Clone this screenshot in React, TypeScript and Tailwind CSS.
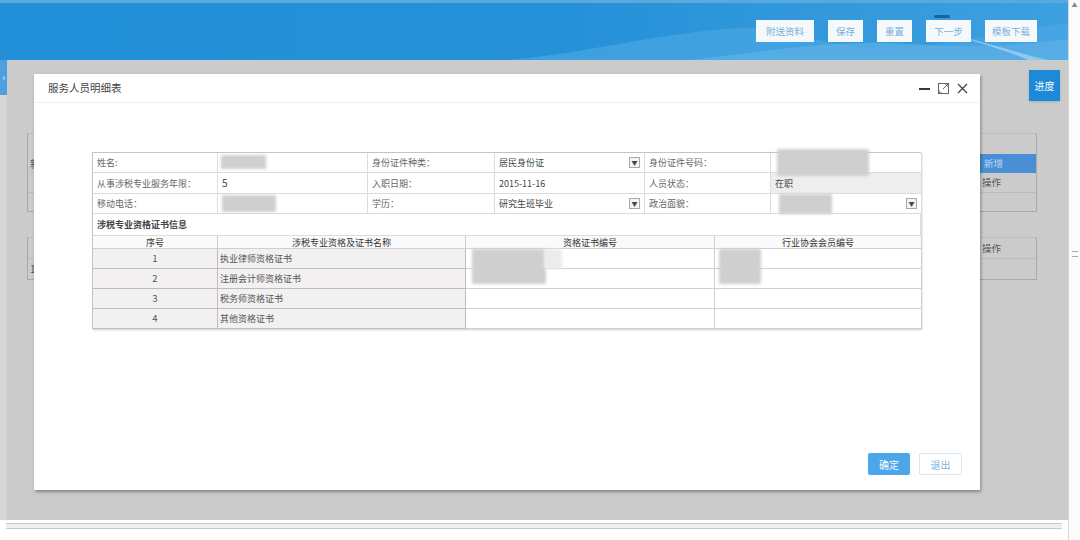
import { ReactNode } from 'react';

const font = { fontFamily: '"Noto Sans CJK SC", "Noto Sans", sans-serif' };

const topButtons = [
    { label: '附送资料', w: 'w-[58px]' },
    { label: '保存', w: 'w-[35px]' },
    { label: '重置', w: 'w-[35px]' },
    { label: '下一步', w: 'w-[45px]' },
    { label: '模板下载', w: 'w-[52px]' },
];

const certs = ['执业律师资格证书', '注册会计师资格证书', '税务师资格证书', '其他资格证书'];

function Blob({ className }: { className: string }) {
    return <span className={`absolute bg-[#cfcfcf] blur-[1.5px] ${className}`} />;
}

function Drop() {
    return (
        <span className="flex h-[11px] w-[11px] items-center justify-center border border-[#a9a9a9] bg-[#f4f4f4] text-[6px] leading-none text-[#444]">▼</span>
    );
}

function Cell({ children, className = '' }: { children?: ReactNode; className?: string }) {
    return (
        <div className={`relative flex items-center border-r border-b border-[#dcdcdc] px-[4px] text-[9px] leading-none ${className}`}>
            {children}
        </div>
    );
}

export default function App() {
    return (
        <div className="flex h-[540px] w-[1080px] overflow-hidden bg-white" style={font}>
            <div className="flex w-[1068px] flex-col">
                {/* Header */}
                <header className="relative h-[60px] overflow-hidden border-t-[3px] border-[#58a9de] bg-gradient-to-r from-[#2290d8] via-[#2390d8] to-[#3da0e0]">
                    <svg className="absolute right-0 top-0 h-[57px] w-[560px]" viewBox="0 0 560 57" preserveAspectRatio="none">
                        <path d="M0 57 C80 50 150 30 230 25 C280 22 300 40 360 45 C420 50 470 30 560 20 L560 57 Z" fill="#4aa7e2" opacity="0.7" />
                        <path d="M180 57 C260 48 320 38 380 40 C430 42 470 48 560 36 L560 57 Z" fill="#62b4e8" opacity="0.6" />
                        <path d="M440 30 C480 40 510 50 540 57 L520 57 C500 48 470 40 440 30 Z" fill="#ffffff" opacity="0.35" />
                    </svg>
                    <div className="relative flex justify-end gap-[14px] pr-[31px] pt-[17px]">
                        {topButtons.map((b) => (
                            <div key={b.label} className="relative">
                                {b.label === '下一步' && <span className="absolute left-[8px] top-[-5px] h-[3px] w-[16px] rounded-sm bg-[#1c5f9a]" />}
                                <button className={`flex h-[22px] ${b.w} items-center justify-center bg-[#f5f9fc] text-[9.5px] text-[#7aafd8]`}>{b.label}</button>
                            </div>
                        ))}
                    </div>
                </header>

                {/* Body */}
                <div className="flex h-[460px]">
                    <div className="flex w-[7px] flex-col bg-[#d6d6d6]">
                        <div className="flex h-[35px] items-center justify-center bg-[#4d9fe0] text-[9px] text-white">›</div>
                    </div>
                    <div className="relative flex-1 bg-[#cbcbcb]">
                        {/* underlying page, dimmed */}
                        <div className="flex flex-col gap-[25px] pl-[20px] pt-[73px]">
                            <div className="flex h-[79px] w-[1010px] flex-col border border-[#a9a9a9] border-t-[#bdbdbd]">
                                <div className="h-[20px]" />
                                <div className="flex h-[19px] items-center">
                                    <span className="pl-[2px] text-[10px] text-[#555]">新</span>
                                    <span className="ml-auto flex h-full w-[57px] items-center bg-[#4a8fd6] pl-[5px] text-[9.5px] text-[#b9d6f2]">新增</span>
                                </div>
                                <div className="flex h-[20px] items-center border-b border-[#bcbcbc]">
                                    <span className="ml-auto w-[57px] pl-[3px] text-[9.5px] text-[#555]">操作</span>
                                </div>
                            </div>
                            <div className="flex h-[43px] w-[1010px] flex-col border border-[#a9a9a9] border-t-[#bdbdbd]">
                                <div className="flex h-[21px] items-center border-b border-[#bcbcbc]">
                                    <span className="ml-auto w-[57px] pl-[3px] text-[9.5px] text-[#555]">操作</span>
                                </div>
                                <div className="flex h-[21px] items-center">
                                    <span className="pl-[2px] text-[10px] text-[#555]">1</span>
                                </div>
                            </div>
                        </div>

                        {/* progress button */}
                        <button className="absolute left-[1022px] top-[10px] flex h-[31px] w-[31px] items-center justify-center bg-[#1d8ad8] text-[10px] text-white shadow">进度</button>

                        {/* Modal */}
                        <div className="absolute left-[27px] top-[14px] flex h-[416px] w-[946px] flex-col bg-white shadow-[1px_2px_3px_rgba(0,0,0,0.35)]">
                            <div className="flex h-[29px] items-center justify-between border-b border-[#f0f0f0] pl-[14px] pr-[12px]">
                                <span className="text-[10.5px] text-[#444]">服务人员明细表</span>
                                <div className="flex items-center gap-[8px] text-[#333]">
                                    <svg width="11" height="11" viewBox="0 0 11 11"><path d="M0 6h11" stroke="#222" strokeWidth="1.8" /></svg>
                                    <svg width="11" height="11" viewBox="0 0 11 11" fill="none" stroke="#666" strokeWidth="1">
                                        <rect x="0.5" y="0.5" width="10" height="10" />
                                        <path d="M5 6 L10 1 M7 1h3v3 M1 7v3h3" />
                                    </svg>
                                    <svg width="11" height="11" viewBox="0 0 11 11"><path d="M1 1l9 9M10 1l-9 9" stroke="#444" strokeWidth="1.3" /></svg>
                                </div>
                            </div>

                            <div className="flex flex-1 flex-col pl-[58px] pt-[49px]">
                                <div className="w-[829px] border-l border-t border-[#c4c4c4] shadow-[1px_1px_2px_rgba(0,0,0,0.2)]">
                                    {/* info rows */}
                                    <div className="grid grid-cols-[125px_150px_127px_150px_126px_151px] text-[#666]">
                                        <Cell className="h-[20px]">姓名:</Cell>
                                        <Cell className="h-[20px]"><Blob className="left-[3px] top-[2px] h-[14px] w-[45px]" /></Cell>
                                        <Cell className="h-[20px]">身份证件种类：</Cell>
                                        <Cell className="h-[20px] justify-between text-[#444]">居民身份证<Drop /></Cell>
                                        <Cell className="h-[20px]">身份证件号码：</Cell>
                                        <Cell className="h-[20px]"><Blob className="z-10 left-[6px] top-[-4px] h-[27px] w-[92px]" /></Cell>

                                        <Cell className="h-[21px]">从事涉税专业服务年限：</Cell>
                                        <Cell className="h-[21px] text-[10px] text-[#444]">5</Cell>
                                        <Cell className="h-[21px]">入职日期：</Cell>
                                        <Cell className="h-[21px] text-[9.5px] text-[#444]">2015-11-16</Cell>
                                        <Cell className="h-[21px]">人员状态：</Cell>
                                        <Cell className="h-[21px] bg-[#eeeeee] text-[#444]">在职</Cell>

                                        <Cell className="h-[20px]">移动电话：</Cell>
                                        <Cell className="h-[20px]"><Blob className="left-[4px] top-[1px] h-[17px] w-[54px]" /></Cell>
                                        <Cell className="h-[20px]">学历：</Cell>
                                        <Cell className="h-[20px] justify-between text-[#444]">研究生班毕业<Drop /></Cell>
                                        <Cell className="h-[20px]">政治面貌：</Cell>
                                        <Cell className="h-[20px] justify-end"><Blob className="left-[8px] top-[0px] h-[20px] w-[53px]" /><Drop /></Cell>
                                    </div>

                                    <div className="flex h-[22px] items-center border-r border-b border-[#dcdcdc] pl-[4px] text-[9px] font-bold text-[#444]">涉税专业资格证书信息</div>

                                    <div className="grid grid-cols-[125px_248px_249px_207px] text-[9px] leading-none">
                                        <div className="flex h-[13px] items-center justify-center border-r border-b border-[#cfcfcf] bg-[#fafafa] text-[#333]">序号</div>
                                        <div className="flex h-[13px] items-center justify-center border-r border-b border-[#cfcfcf] bg-[#fafafa] text-[#333]">涉税专业资格及证书名称</div>
                                        <div className="flex h-[13px] items-center justify-center border-r border-b border-[#cfcfcf] bg-[#fafafa] text-[#333]">资格证书编号</div>
                                        <div className="flex h-[13px] items-center justify-center border-r border-b border-[#cfcfcf] bg-[#fafafa] text-[#333]">行业协会会员编号</div>
                                        {certs.map((c, i) => (
                                            <div key={c} className="contents">
                                                <div className="flex h-[20px] items-center justify-center border-r border-b border-[#bdbdbd] bg-[#f2f0f0] text-[9.5px] text-[#555]">{i + 1}</div>
                                                <div className="flex h-[20px] items-center border-r border-b border-[#bdbdbd] bg-[#f2f0f0] pl-[2px] text-[#555]">{c}</div>
                                                <div className="relative h-[20px] border-r border-b border-[#cfcfcf]">
                                                    {i === 0 && <Blob className="z-10 left-[6px] top-[0px] h-[35px] w-[74px]" />}
                                                    {i === 0 && <span className="absolute left-[78px] top-[0px] z-10 h-[20px] w-[18px] bg-[#ececec] blur-[1.5px]" />}
                                                </div>
                                                <div className="relative h-[20px] border-r border-b border-[#cfcfcf]">
                                                    {i === 0 && <Blob className="z-10 left-[4px] top-[0px] h-[35px] w-[42px]" />}
                                                </div>
                                            </div>
                                        ))}
                                    </div>
                                </div>

                                <div className="mt-auto flex justify-end gap-[9px] pb-[15px] pr-[18px]">
                                    <button className="flex h-[22px] w-[42px] items-center justify-center rounded-[2px] bg-[#4ca6ea] text-[10px] text-white">确定</button>
                                    <button className="flex h-[22px] w-[43px] items-center justify-center rounded-[2px] border border-[#d6e6f3] bg-white text-[10px] text-[#7ab5e4]">退出</button>
                                </div>
                            </div>
                        </div>
                    </div>
                </div>

                {/* horizontal scrollbar */}
                <div className="flex h-[20px] flex-col bg-white px-[6px] pt-[3px]">
                    <div className="h-[6px] border-y border-[#c8c8c8] bg-[#f0f0f0]" />
                </div>
            </div>

            {/* vertical scrollbar */}
            <div className="flex w-[12px] flex-col items-center border-l border-[#d8d8d8] bg-[#fbfbfb] pt-[2px]">
                <span className="text-[6px] leading-none text-[#888]">▲</span>
                <div className="mt-[243px] h-[6px] w-[6px] border-y border-[#aaa]" />
            </div>
        </div>
    );
}
